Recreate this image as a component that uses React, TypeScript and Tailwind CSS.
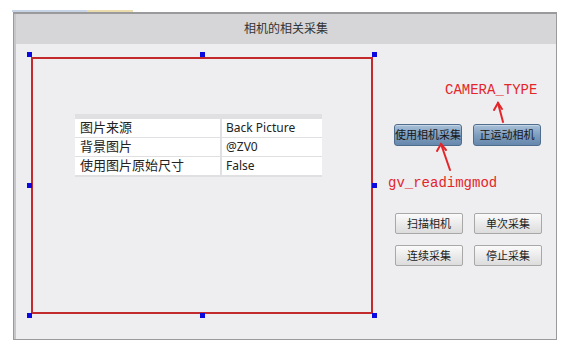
const cjk = "font-['Noto_Sans','Noto_Sans_CJK_SC',sans-serif]";

const rows = [
  ["图片来源", "Back Picture"],
  ["背景图片", "@ZV0"],
  ["使用图片原始尺寸", "False"],
];

function Handle({ className }: { className: string }) {
  return <span className={`absolute w-[5px] h-[5px] bg-[#0a0ae0] ${className}`} />;
}

function BlueButton({ label }: { label: string }) {
  return (
    <div className="w-[68px] h-[22px] flex items-center justify-center rounded-[3px] border border-[#4e6d8e] bg-linear-to-b from-[#a9c1d9] via-[#7f9ebe] to-[#6688ad] text-[11px] text-[#151515] shadow-[inset_0_1px_0_rgba(255,255,255,0.35)]">
      {label}
    </div>
  );
}

function GrayButton({ label }: { label: string }) {
  return (
    <div className="w-[68px] h-[21px] flex items-center justify-center rounded-[2px] border border-[#a8a8a8] bg-linear-to-b from-[#fbfbfb] to-[#dcdcdc] text-[11px] text-[#222]">
      {label}
    </div>
  );
}

export default function App() {
  return (
    <div className={`relative w-[569px] h-[347px] bg-white overflow-hidden ${cjk}`}>
      {/* tabs strip above the window */}
      <div className="h-[12px] flex items-end pl-[12px]">
        <span className="h-[2px] w-[75px] bg-[#c6d4e6]" />
        <span className="h-[2px] w-[46px] bg-[#ebdcae]" />
      </div>

      <div className="ml-[13px] w-[544px] h-[328px] border border-[#9a9a9c] border-t-2 flex flex-col">
        <div className="h-[30px] border-l-2 border-[#c6c6ca] bg-[#d6d6d8] flex items-center justify-center text-[12px] text-[#333]">
          相机的相关采集
        </div>

        <div className="flex-1 border-l-2 border-[#c6c6ca] bg-[#eeedf0] flex">
          {/* design canvas */}
          <div className="relative ml-[15px] mt-[13px] w-[342px] h-[257px] border-2 border-[#c32a2c] pl-[42px] pt-[55px]">
            <Handle className="-left-[6px] -top-[7px]" />
            <Handle className="left-[167px] -top-[7px]" />
            <Handle className="left-[339px] -top-[7px]" />
            <Handle className="-left-[6px] top-[124px]" />
            <Handle className="left-[339px] top-[124px]" />
            <Handle className="-left-[6px] top-[254px]" />
            <Handle className="left-[167px] top-[254px]" />
            <Handle className="left-[339px] top-[254px]" />

            <div className="w-[247px] bg-[#e0e0e2] pt-[5px] pb-[2px] grid grid-cols-[145px_100px] gap-x-[2px] gap-y-[1px]">
              {rows.map(([k, v]) => (
                <div key={k} className="contents">
                  <div className="h-[18px] bg-white pl-[5px] flex items-center text-[13px] text-[#222]">{k}</div>
                  <div className="h-[18px] bg-white pl-[4px] flex items-center text-[12px] text-[#222]">{v}</div>
                </div>
              ))}
            </div>
          </div>

          {/* buttons and annotations */}
          <div className="ml-[15px] pt-[38px] flex flex-col font-['Liberation_Mono',monospace] text-[14px] leading-[16px] text-[#e3262a]">
            <div className="ml-[57px]">CAMERA_TYPE</div>
            <div className={`mt-[26px] ml-[6px] flex gap-[11px] ${cjk}`}>
              <BlueButton label="使用相机采集" />
              <BlueButton label="正运动相机" />
            </div>
            <div className="mt-[29px]">gv_readimgmod</div>
            <div className={`mt-[22px] ml-[7px] flex gap-[11px] ${cjk}`}>
              <GrayButton label="扫描相机" />
              <GrayButton label="单次采集" />
            </div>
            <div className={`mt-[11px] ml-[7px] flex gap-[11px] ${cjk}`}>
              <GrayButton label="连续采集" />
              <GrayButton label="停止采集" />
            </div>
          </div>
        </div>
      </div>

      {/* annotation arrows */}
      <svg className="absolute left-0 top-0 pointer-events-none" width="569" height="347" viewBox="0 0 569 347">
        <g stroke="#e3262a" strokeWidth="2" fill="none" strokeLinecap="round">
          <path d="M503 122 L498 103" />
          <path d="M494 110 L498 103 L502 109" />
          <path d="M450 170 L441 144" />
          <path d="M437 151 L441 144 L446 150" />
        </g>
      </svg>
    </div>
  );
}
